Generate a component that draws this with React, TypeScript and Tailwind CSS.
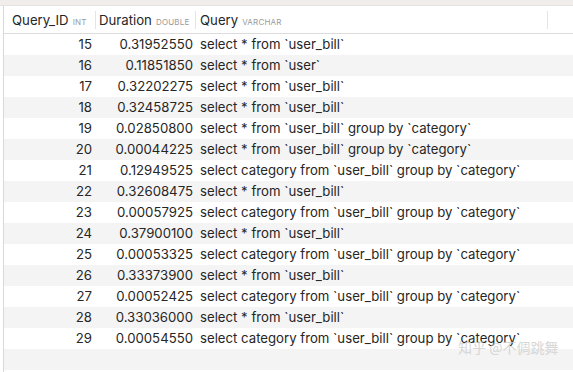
const rows: [number, string, string][] = [
  [15, "0.31952550", "select * from `user_bill`"],
  [16, "0.11851850", "select * from `user`"],
  [17, "0.32202275", "select * from `user_bill`"],
  [18, "0.32458725", "select * from `user_bill`"],
  [19, "0.02850800", "select * from `user_bill` group by `category`"],
  [20, "0.00044225", "select * from `user_bill` group by `category`"],
  [21, "0.12949525", "select category from `user_bill` group by `category`"],
  [22, "0.32608475", "select * from `user_bill`"],
  [23, "0.00057925", "select category from `user_bill` group by `category`"],
  [24, "0.37900100", "select * from `user_bill`"],
  [25, "0.00053325", "select category from `user_bill` group by `category`"],
  [26, "0.33373900", "select * from `user_bill`"],
  [27, "0.00052425", "select category from `user_bill` group by `category`"],
  [28, "0.33036000", "select * from `user_bill`"],
  [29, "0.00054550", "select category from `user_bill` group by `category`"],
];

const App = () => {
  return (
    <div
      className="relative w-[573px] h-[372px] overflow-hidden bg-white text-[13.2px] text-[#262626]"
      style={{ fontFamily: "Inter, 'Noto Sans', sans-serif" }}
    >
      <div className="h-[6px] bg-[#f1edeb] border-b border-[#e6e2e0]" />
      <div className="ml-[3px] border-l border-[#d9d9d9] h-[366px]">
        <div className="flex h-[28px] items-center border-b border-[#dcdcdc]">
          <div className="w-[92px] pl-[8px] flex items-baseline gap-[4px] border-r border-[#e4e4e4] h-[18px]">
            <span>Query_ID</span>
            <span className="text-[8px] text-[#9a9a9a] tracking-wide">INT</span>
          </div>
          <div className="w-[100px] pl-[3px] flex items-baseline gap-[4px] border-r border-[#e4e4e4] h-[18px]">
            <span>Duration</span>
            <span className="text-[8px] text-[#9a9a9a] tracking-wide">DOUBLE</span>
          </div>
          <div className="w-[352px] pl-[4px] flex items-baseline gap-[4px] border-r border-[#e4e4e4] h-[18px]">
            <span>Query</span>
            <span className="text-[8px] text-[#9a9a9a] tracking-wide">VARCHAR</span>
          </div>
        </div>
        {rows.map(([id, dur, q], i) => (
          <div
            key={id}
            className={`flex h-[21px] items-center ${i % 2 === 1 ? "bg-[#f4f4f4]" : "bg-white"}`}
          >
            <div className="w-[92px] pr-[4px] text-right">{id}</div>
            <div className="w-[100px] pr-[3px] text-right">{dur}</div>
            <div className="pl-[4px] whitespace-nowrap">{q}</div>
          </div>
        ))}
        <div className="h-[21px] bg-[#f4f4f4]" />
      </div>
      <div
        className="absolute left-[458px] top-[337px] text-[14px] text-[#cfcfcf] opacity-80 whitespace-nowrap"
        style={{ fontFamily: "'Noto Sans CJK SC', sans-serif" }}
      >
        知乎 @不倜跳舞
      </div>
    </div>
  );
};

export default App;
